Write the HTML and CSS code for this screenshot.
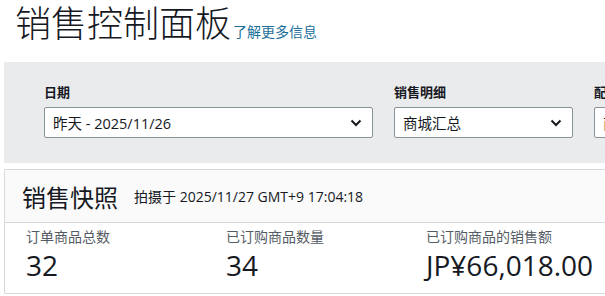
FILE: index.html
```html
<!DOCTYPE html>
<html lang="zh-CN">
<head>
<meta charset="utf-8">
<title>销售控制面板</title>
<link rel="stylesheet" href="styles.css">
</head>
<body>
<div class="page">
  <header class="page-head">
    <h1 class="title">销售控制面板</h1>
    <a class="learn" href="#">了解更多信息</a>
  </header>

  <section class="filters">
    <div class="field field-date">
      <div class="field-label">日期</div>
      <div class="select">
        <span class="select-text">昨天 - 2025/11/26</span>
        <svg class="chev" width="12" height="8" viewBox="0 0 12 8"><path d="M1.5 1.5 L6 6 L10.5 1.5" fill="none" stroke="#16191f" stroke-width="2"/></svg>
      </div>
    </div>
    <div class="field field-detail">
      <div class="field-label">销售明细</div>
      <div class="select">
        <span class="select-text">商城汇总</span>
        <svg class="chev" width="12" height="8" viewBox="0 0 12 8"><path d="M1.5 1.5 L6 6 L10.5 1.5" fill="none" stroke="#16191f" stroke-width="2"/></svg>
      </div>
    </div>
    <div class="field field-ship">
      <div class="field-label">配送渠道</div>
      <div class="select">
        <span class="select-text">商城汇总</span>
        <svg class="chev" width="12" height="8" viewBox="0 0 12 8"><path d="M1.5 1.5 L6 6 L10.5 1.5" fill="none" stroke="#16191f" stroke-width="2"/></svg>
      </div>
    </div>
  </section>

  <section class="card">
    <div class="card-head">
      <h2 class="card-title">销售快照</h2>
      <span class="card-sub">拍摄于 2025/11/27 GMT+9 17:04:18</span>
    </div>
    <div class="metrics">
      <div class="metric">
        <div class="metric-label">订单商品总数</div>
        <div class="metric-value">32</div>
      </div>
      <div class="metric">
        <div class="metric-label">已订购商品数量</div>
        <div class="metric-value">34</div>
      </div>
      <div class="metric">
        <div class="metric-label">已订购商品的销售额</div>
        <div class="metric-value">JP¥66,018.00</div>
      </div>
    </div>
  </section>
</div>
</body>
</html>
```

FILE: styles.css
```css
html, body {
  margin: 0;
  padding: 0;
  overflow: hidden;
  background: #ffffff;
}

body {
  font-family: "Open Sans", "Noto Sans CJK SC", sans-serif;
  color: #16191f;
}

.page {
  width: 900px;
  padding-left: 4px;
}

.page-head {
  display: flex;
  align-items: baseline;
  padding-left: 11px;
  height: 62px;
}

.title {
  margin: 0;
  font-family: "Noto Sans CJK SC", sans-serif;
  font-weight: 300;
  font-size: 36px;
  line-height: 42px;
  color: #16191f;
}

.learn {
  margin-left: 2px;
  font-family: "Noto Sans CJK SC", sans-serif;
  font-size: 14px;
  color: #1a6f9a;
  text-decoration: none;
}

.filters {
  display: flex;
  gap: 21px;
  background: #eaebed;
  padding: 20px 0 25px 40px;
}

.field-label {
  font-family: "Noto Sans CJK SC", sans-serif;
  font-weight: 700;
  font-size: 13px;
  line-height: 20px;
  margin-bottom: 5px;
}

.select {
  box-sizing: border-box;
  height: 31px;
  display: flex;
  align-items: center;
  justify-content: space-between;
  background: #ffffff;
  border: 1px solid #879596;
  border-radius: 2px;
  padding: 0 10px 0 8px;
  font-size: 14.5px;
  color: #16191f;
}

.field-date .select { width: 329px; }
.field-detail .select { width: 179px; }
.field-ship .select { width: 179px; }

.chev { display: block; }

.card {
  margin-top: 6px;
  border: 1px solid #d5dbdb;
  border-radius: 1px;
}

.card-head {
  display: flex;
  align-items: center;
  gap: 16px;
  height: 52px;
  padding-left: 17px;
  background: #fafafa;
  border-bottom: 1px solid #d5dbdb;
}

.card-title {
  margin: 0;
  font-family: "Noto Sans CJK SC", sans-serif;
  font-weight: 400;
  font-size: 24px;
  color: #16191f;
}

.card-sub {
  font-size: 14px;
  color: #16191f;
}

.metrics {
  display: grid;
  grid-template-columns: 200px 200px 200px;
  padding: 4px 0 9px 21px;
}

.metric-label {
  font-size: 14px;
  line-height: 19px;
  color: #545b64;
}

.metric-value {
  font-size: 28px;
  line-height: 38px;
  color: #16191f;
}
```
